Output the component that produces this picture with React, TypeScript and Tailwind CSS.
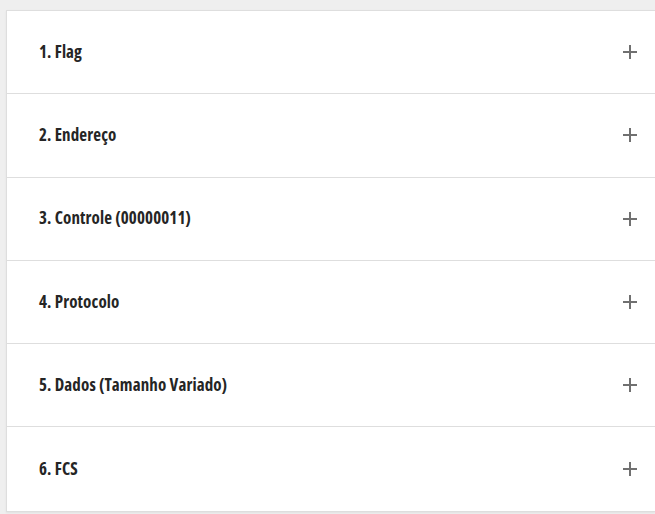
const items = [
  "1. Flag",
  "2. Endereço",
  "3. Controle (00000011)",
  "4. Protocolo",
  "5. Dados (Tamanho Variado)",
  "6. FCS",
];

function PlusIcon() {
  return (
    <svg width="14" height="14" viewBox="0 0 14 14" className="text-[#707070]">
      <path d="M7 0v14M0 7h14" stroke="currentColor" strokeWidth="2" fill="none" />
    </svg>
  );
}

export default function App() {
  return (
    <div className="min-h-[514px] bg-[#efefef] pt-[10px] pl-[6px] pb-[4px]">
      <div className="bg-white border border-[#dedede] border-r-0 shadow-[0_1px_2px_rgba(0,0,0,0.06)]">
        {items.map((label, i) => (
          <div
            key={label}
            className={`flex h-[83.3px] items-center justify-between pl-[32px] pr-[18px] ${
              i < items.length - 1 ? "border-b border-[#dedede]" : ""
            }`}
          >
            <span className="font-['Open_Sans',sans-serif] font-bold font-stretch-condensed text-[17px] tracking-[0.12px] text-[#252525] -mt-[1px]">
              {label}
            </span>
            <PlusIcon />
          </div>
        ))}
      </div>
    </div>
  );
}
